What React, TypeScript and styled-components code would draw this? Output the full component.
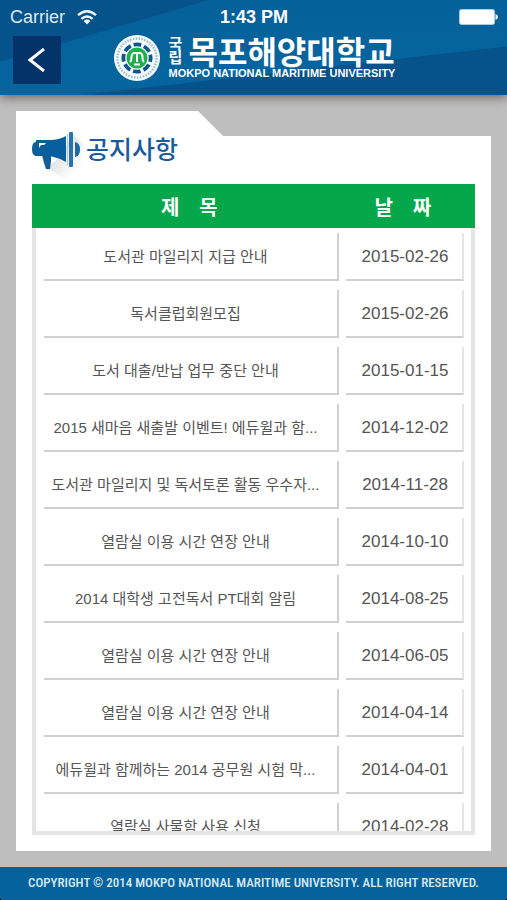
import React from "react";
import styled, { createGlobalStyle } from "styled-components";

const korean = `"Noto Sans CJK KR", "Noto Sans", sans-serif`;
const latin = `"Liberation Sans", "Noto Sans CJK KR", sans-serif`;
const narrow = `"Roboto Condensed", "Open Sans Condensed", "Liberation Sans Narrow", "Noto Sans CJK KR", sans-serif`;

const GlobalStyle = createGlobalStyle`
  * { box-sizing: border-box; }
  body { margin: 0; background: #000; }
`;

const Page = styled.div`
  display: flex;
  flex-direction: column;
  height: 100vh;
  overflow: hidden;
  background: #bebebe;
  border-radius: 0 0 4px 4px;
  font-family: ${latin};
`;

const Header = styled.header`
  position: relative;
  z-index: 0;
  flex: none;
  padding-bottom: 11px;
  background: linear-gradient(#05619a, #06659f);
  box-shadow: 0 2px 10px rgba(60, 50, 50, 0.7);
  color: #fff;

  &::before,
  &::after {
    content: "";
    position: absolute;
    inset: 0;
    z-index: -1;
    background: #06528a;
  }
  &::before {
    clip-path: polygon(0 0, 41% 0, 0 65%);
  }
  &::after {
    clip-path: polygon(16% 100%, 100% 49%, 100% 100%);
  }
`;

const StatusBar = styled.div`
  display: grid;
  grid-template-columns: 1fr auto 1fr;
  align-items: center;
  height: 36px;
  padding: 0 9px 2px 10px;
  font-size: 18px;
  line-height: 20px;
`;

const Carrier = styled.div`
  display: flex;
  align-items: center;
  gap: 12px;
  color: #dcebf5;
`;

const Clock = styled.time`
  font-weight: bold;
`;

const BatteryIcon = styled.svg`
  justify-self: end;
`;

const Brand = styled.div`
  display: grid;
  grid-template-columns: 48px 1fr 48px;
  padding: 0 12px 0 13px;
`;

const BackButton = styled.button`
  display: flex;
  align-items: center;
  justify-content: center;
  width: 48px;
  height: 48px;
  padding: 0;
  border: 0;
  background: #043369;
  color: #fff;
  cursor: pointer;
`;

const Logo = styled.div`
  display: flex;
  align-items: flex-start;
  justify-content: center;
  gap: 8px;
`;

const Wordmark = styled.div`
  display: grid;
  row-gap: 3px;
  white-space: nowrap;
`;

const NameLine = styled.div`
  display: flex;
  align-items: center;
  gap: 4px;
  height: 28px;
`;

const National = styled.span`
  width: 16px;
  font: bold 15px/14px ${korean};
  white-space: normal;
  word-break: break-all;
`;

const University = styled.span`
  font: bold 32px/28px ${korean};
`;

const EnglishName = styled.span`
  font: bold 11px/12px ${latin};
`;

const Main = styled.main`
  display: flex;
  flex: 1;
  flex-direction: column;
  min-height: 0;
  padding: 16px;
`;

const Card = styled.section`
  display: flex;
  flex: 1;
  flex-direction: column;
  min-height: 0;
  padding: 0 16px 16px;
  background: #fff;
  clip-path: polygon(0 0, 182px 0, 207px 25px, 100% 25px, 100% 100%, 0 100%);
`;

const CardTitle = styled.div`
  display: flex;
  flex: none;
  align-items: center;
  height: 73px;
  gap: 4px;
`;

const Heading = styled.h1`
  margin: 0;
  color: #1a5c9b;
  font: 500 25px/36px ${korean};
`;

const Board = styled.table`
  display: flex;
  flex: 1;
  flex-direction: column;
  min-height: 0;
`;

const BoardHead = styled.thead`
  display: block;
  flex: none;
  background: #04a84b;
  color: #fff;
`;

const HeadRow = styled.tr`
  display: grid;
  grid-template-columns: 5fr 2fr;
  padding-right: 8px;
`;

const HeadCell = styled.th`
  height: 44px;
  padding: 0 4px 0 0;
  font: bold 20px/46px ${korean};

  &:first-child {
    padding: 0 0 0 4px;
  }
`;

const BoardBody = styled.tbody`
  display: block;
  flex: 1;
  min-height: 0;
  padding: 5px 7px 0 8px;
  border: 4px solid #e5e5e5;
  border-top: 0;
  overflow: auto;
  scrollbar-width: none;
`;

const Row = styled.tr`
  display: grid;
  grid-template-columns: 5fr 2fr;
  column-gap: 7px;
  margin-bottom: 9px;
`;

const Cell = styled.td<{ $date?: boolean }>`
  height: 48px;
  padding: ${(p) => (p.$date ? "0 0 0 2px" : "0 12px 0 2px")};
  overflow: hidden;
  border-right: 2px solid ${(p) => (p.$date ? "#e4e4e4" : "#d0d0d0")};
  border-bottom: 2px solid #d0d0d0;
  color: #555;
  font-family: ${latin};
  font-size: ${(p) => (p.$date ? 17 : 15)}px;
  line-height: 48px;
  text-align: center;
  text-overflow: ellipsis;
  white-space: nowrap;
`;

const NoticeLink = styled.a`
  color: inherit;
  text-decoration: none;
`;

const Footer = styled.footer`
  flex: none;
  height: 33px;
  background: #06629c;
  color: #d6e9f5;
  font: 500 13px/32px ${narrow};
  text-align: center;
  white-space: nowrap;
`;

const notices = [
  ["도서관 마일리지 지급 안내", "2015-02-26"],
  ["독서클럽회원모집", "2015-02-26"],
  ["도서 대출/반납 업무 중단 안내", "2015-01-15"],
  ["2015 새마음 새출발 이벤트! 에듀윌과 함...", "2014-12-02"],
  ["도서관 마일리지 및 독서토론 활동 우수자...", "2014-11-28"],
  ["열람실 이용 시간 연장 안내", "2014-10-10"],
  ["2014 대학생 고전독서 PT대회 알림", "2014-08-25"],
  ["열람실 이용 시간 연장 안내", "2014-06-05"],
  ["열람실 이용 시간 연장 안내", "2014-04-14"],
  ["에듀윌과 함께하는 2014 공무원 시험 막...", "2014-04-01"],
  ["열람실 사물함 사용 신청", "2014-02-28"],
];

const WifiIcon = () => (
  <svg width="20" height="15" viewBox="0 0 20 15" fill="none" stroke="#eef6fb" strokeWidth="2.4" aria-hidden="true">
    <path d="M1 5.2Q10-2.6 19 5.2" />
    <path d="M4.4 8.8Q10 4 15.6 8.8" />
    <path d="M10 14.5 6.6 11Q10 8.2 13.4 11Z" fill="#eef6fb" stroke="none" />
  </svg>
);

const Emblem = () => (
  <svg width="48" height="44" viewBox="0 2 48 44" overflow="visible" role="img" aria-label="목포해양대학교">
    <circle cx="24" cy="24" r="23" fill="#f4fafc" />
    <circle cx="24" cy="24" r="19.5" fill="none" stroke="#a3bfd2" strokeWidth="2.4" strokeDasharray="1.6 1.3" />
    <circle cx="24" cy="24" r="16" fill="#f4fafc" />
    <circle cx="24" cy="24" r="13.5" fill="none" stroke="#10558b" strokeWidth="4" strokeDasharray="7.6 3" strokeDashoffset="3.8" />
    <circle cx="24" cy="24" r="11.5" fill="#f4fafc" />
    <circle cx="24" cy="24" r="10.5" fill="#20ad4d" />
    <path
      d="M17 28Q18.5 27 18.5 23.500Q18.500 19 21.500 19H26.500Q29.500 19 29.500 23.500Q29.500 27 31 28M24 19V28M21 30.500h6"
      fill="none"
      stroke="#fff"
      strokeWidth="2"
    />
  </svg>
);

const MegaphoneIcon = () => (
  <svg width="50" height="60" viewBox="0 0 50 60" aria-hidden="true">
    <defs>
      <linearGradient id="shade" x1="0" y1="0" x2="1" y2="1">
        <stop offset="0.2" stopColor="#d6d6d6" />
        <stop offset="0.85" stopColor="#fff" />
      </linearGradient>
    </defs>
    <path d="M40 15 50 25V60H32L14 50 30 38Z" fill="url(#shade)" />
    <path d="M4 24Q0 24 0 31T4 38Z" fill="#125d97" />
    <path d="M4 22H18Q27 22 34 18V44Q27 40 18 38H4Z" fill="#075f9e" />
    <path d="M7 25H14L12 27H9L7 30Z" fill="#fff" />
    <path d="M10 37H19V43L18 51H14L12 45Z" fill="#125d97" />
    <rect x="35" y="16" width="1" height="31" fill="#a9c7dd" />
    <rect x="37" y="14" width="4" height="35" rx="1" fill="#2a74ac" />
    <path d="M43 24Q48 25 48 31.5T43 39Z" fill="#2168a3" />
  </svg>
);

export default function App() {
  return (
    <Page>
      <GlobalStyle />
      <Header>
        <StatusBar>
          <Carrier>
            Carrier
            <WifiIcon />
          </Carrier>
          <Clock>1:43 PM</Clock>
          <BatteryIcon width="39" height="16" viewBox="0 0 39 16" aria-hidden="true">
            <rect x="0.5" y="0.5" width="35" height="15" rx="2" fill="#fff" stroke="#a9cde3" />
            <path d="M36.5 5Q39 6 39 8T36.5 11Z" fill="#fff" />
          </BatteryIcon>
        </StatusBar>
        <Brand>
          <BackButton type="button" aria-label="뒤로">
            <svg width="20" height="24" viewBox="0 0 20 24" fill="none" stroke="currentColor" strokeWidth="3" aria-hidden="true">
              <path d="M17 1 3 12 17 23" />
            </svg>
          </BackButton>
          <Logo>
            <Emblem />
            <Wordmark>
              <NameLine>
                <National>국립</National>
                <University>목포해양대학교</University>
              </NameLine>
              <EnglishName>MOKPO NATIONAL MARITIME UNIVERSITY</EnglishName>
            </Wordmark>
          </Logo>
        </Brand>
      </Header>
      <Main>
        <Card>
          <CardTitle>
            <MegaphoneIcon />
            <Heading>공지사항</Heading>
          </CardTitle>
          <Board>
            <BoardHead>
              <HeadRow>
                <HeadCell scope="col">제&emsp;목</HeadCell>
                <HeadCell scope="col">날&emsp;짜</HeadCell>
              </HeadRow>
            </BoardHead>
            <BoardBody>
              {notices.map(([title, date], i) => (
                <Row key={i}>
                  <Cell>
                    <NoticeLink href="#">{title}</NoticeLink>
                  </Cell>
                  <Cell $date>{date}</Cell>
                </Row>
              ))}
            </BoardBody>
          </Board>
        </Card>
      </Main>
      <Footer>COPYRIGHT © 2014 MOKPO NATIONAL MARITIME UNIVERSITY. ALL RIGHT RESERVED.</Footer>
    </Page>
  );
}
